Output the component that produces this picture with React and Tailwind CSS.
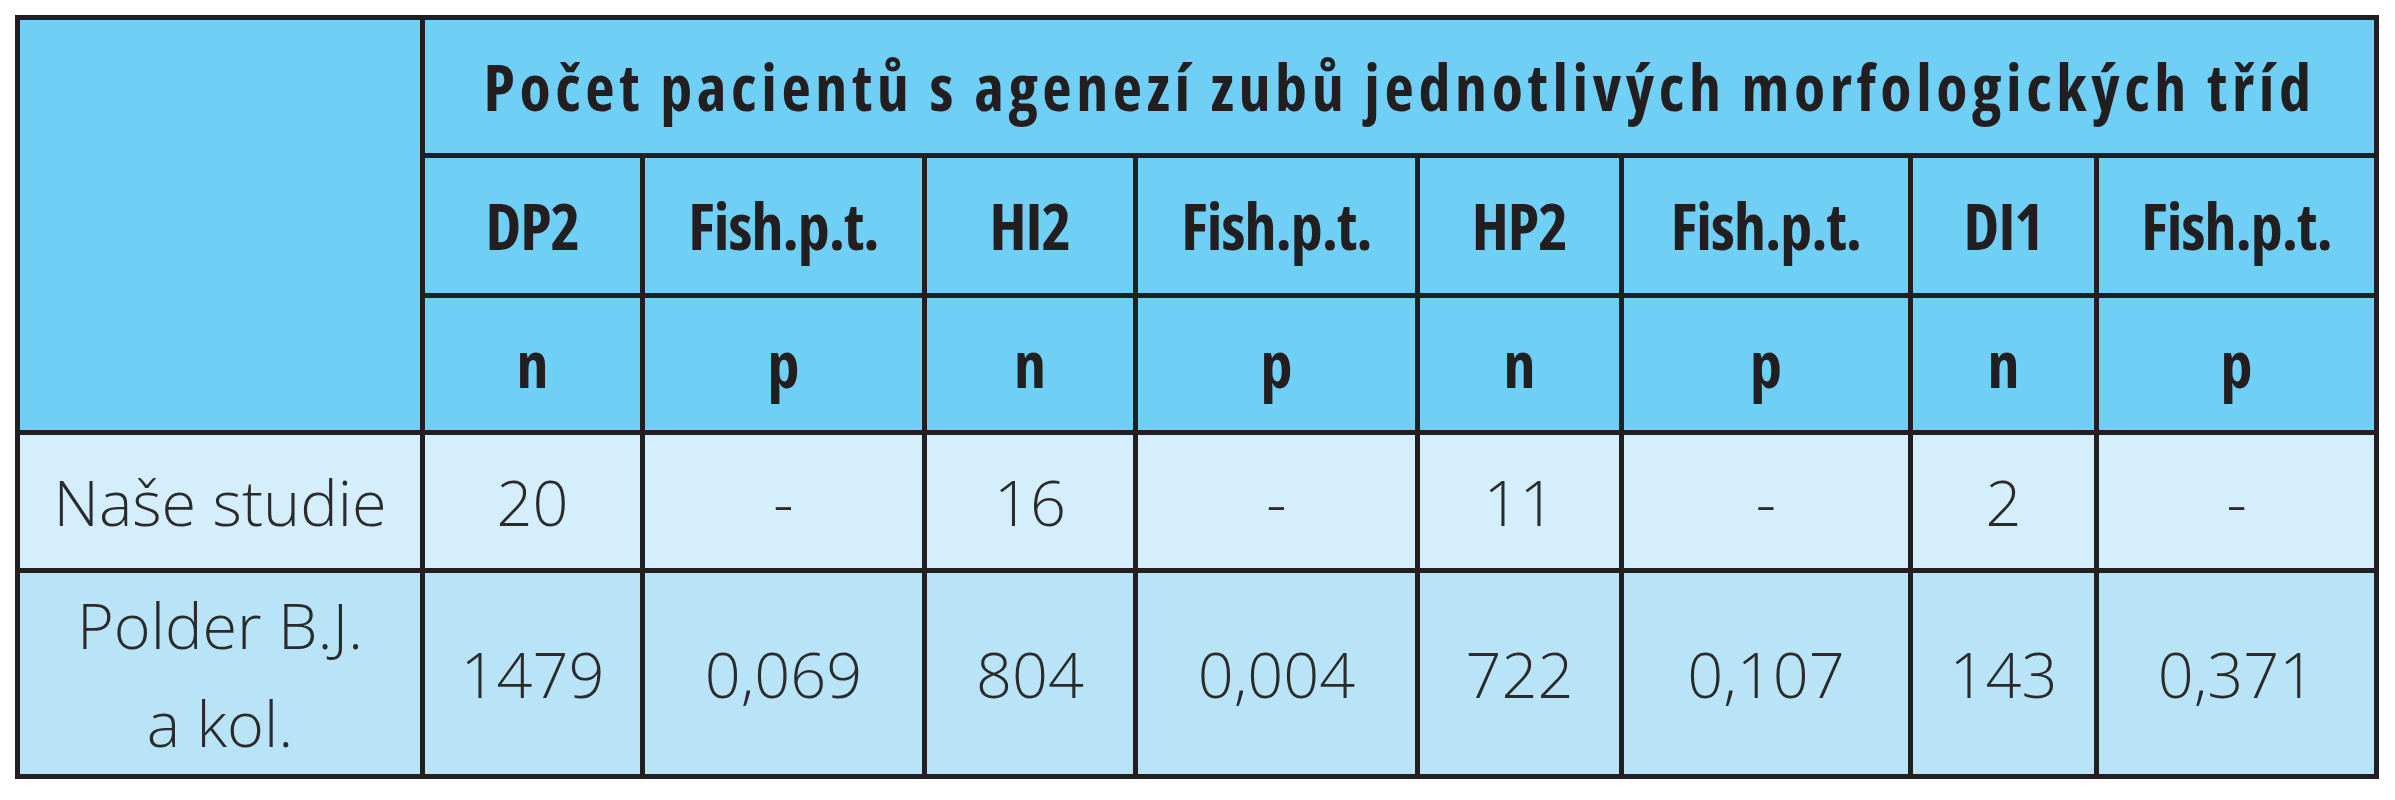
const cols = [405, 220, 282, 211, 282, 204, 289, 186, 280];

const heads = ['DP2', 'Fish.p.t.', 'HI2', 'Fish.p.t.', 'HP2', 'Fish.p.t.', 'DI1', 'Fish.p.t.'];
const units = ['n', 'p', 'n', 'p', 'n', 'p', 'n', 'p'];

const rows = [
  { label: ['Naše studie'], values: ['20', '-', '16', '-', '11', '-', '2', '-'], bg: 'bg-[#d4eefb]', h: 'h-[138px]' },
  { label: ['Polder B.J.', 'a kol.'], values: ['1479', '0,069', '804', '0,004', '722', '0,107', '143', '0,371'], bg: 'bg-[#b9e4f8]', h: 'h-[206px]' },
];

const cell = 'border-[5px] border-[#231f20] text-center align-middle p-0';
const bold = "font-['Open_Sans',sans-serif] [font-stretch:82%] font-bold text-[64px] text-[#231f20] leading-none";
const light = "font-['Open_Sans',sans-serif] [font-stretch:90%] font-light text-[63px] text-[#2b2b2b]";

export default function App() {
  return (
    <div className="w-[2395px] h-[800px] bg-white pt-[15px] pl-[15px]">
      <table className="table-fixed border-collapse w-[2364px]">
        <colgroup>
          {cols.map((w, i) => (
            <col key={i} style={{ width: w }} />
          ))}
        </colgroup>
        <thead className="bg-[#70cff5]">
          <tr className="h-[138px]">
            <th rowSpan={3} className={cell}></th>
            <th colSpan={8} className={`${cell} ${bold} whitespace-nowrap tracking-[4.6px]`}>
              Počet pacientů s agenezí zubů jednotlivých morfologických tříd
            </th>
          </tr>
          <tr className="h-[140px]">
            {heads.map((t, i) => (
              <th key={i} className={`${cell} ${bold} whitespace-nowrap tracking-[-1px]`}>{t}</th>
            ))}
          </tr>
          <tr className="h-[137px]">
            {units.map((t, i) => (
              <th key={i} className={`${cell} ${bold}`}>{t}</th>
            ))}
          </tr>
        </thead>
        <tbody>
          {rows.map((r, ri) => (
            <tr key={ri} className={`${r.h} ${r.bg}`}>
              <td className={`${cell} ${light} leading-[98px]`}>
                {r.label.map((l, li) => (
                  <div key={li}>{l}</div>
                ))}
              </td>
              {r.values.map((v, vi) => (
                <td key={vi} className={`${cell} ${light} leading-none`}>{v}</td>
              ))}
            </tr>
          ))}
        </tbody>
      </table>
    </div>
  );
}
